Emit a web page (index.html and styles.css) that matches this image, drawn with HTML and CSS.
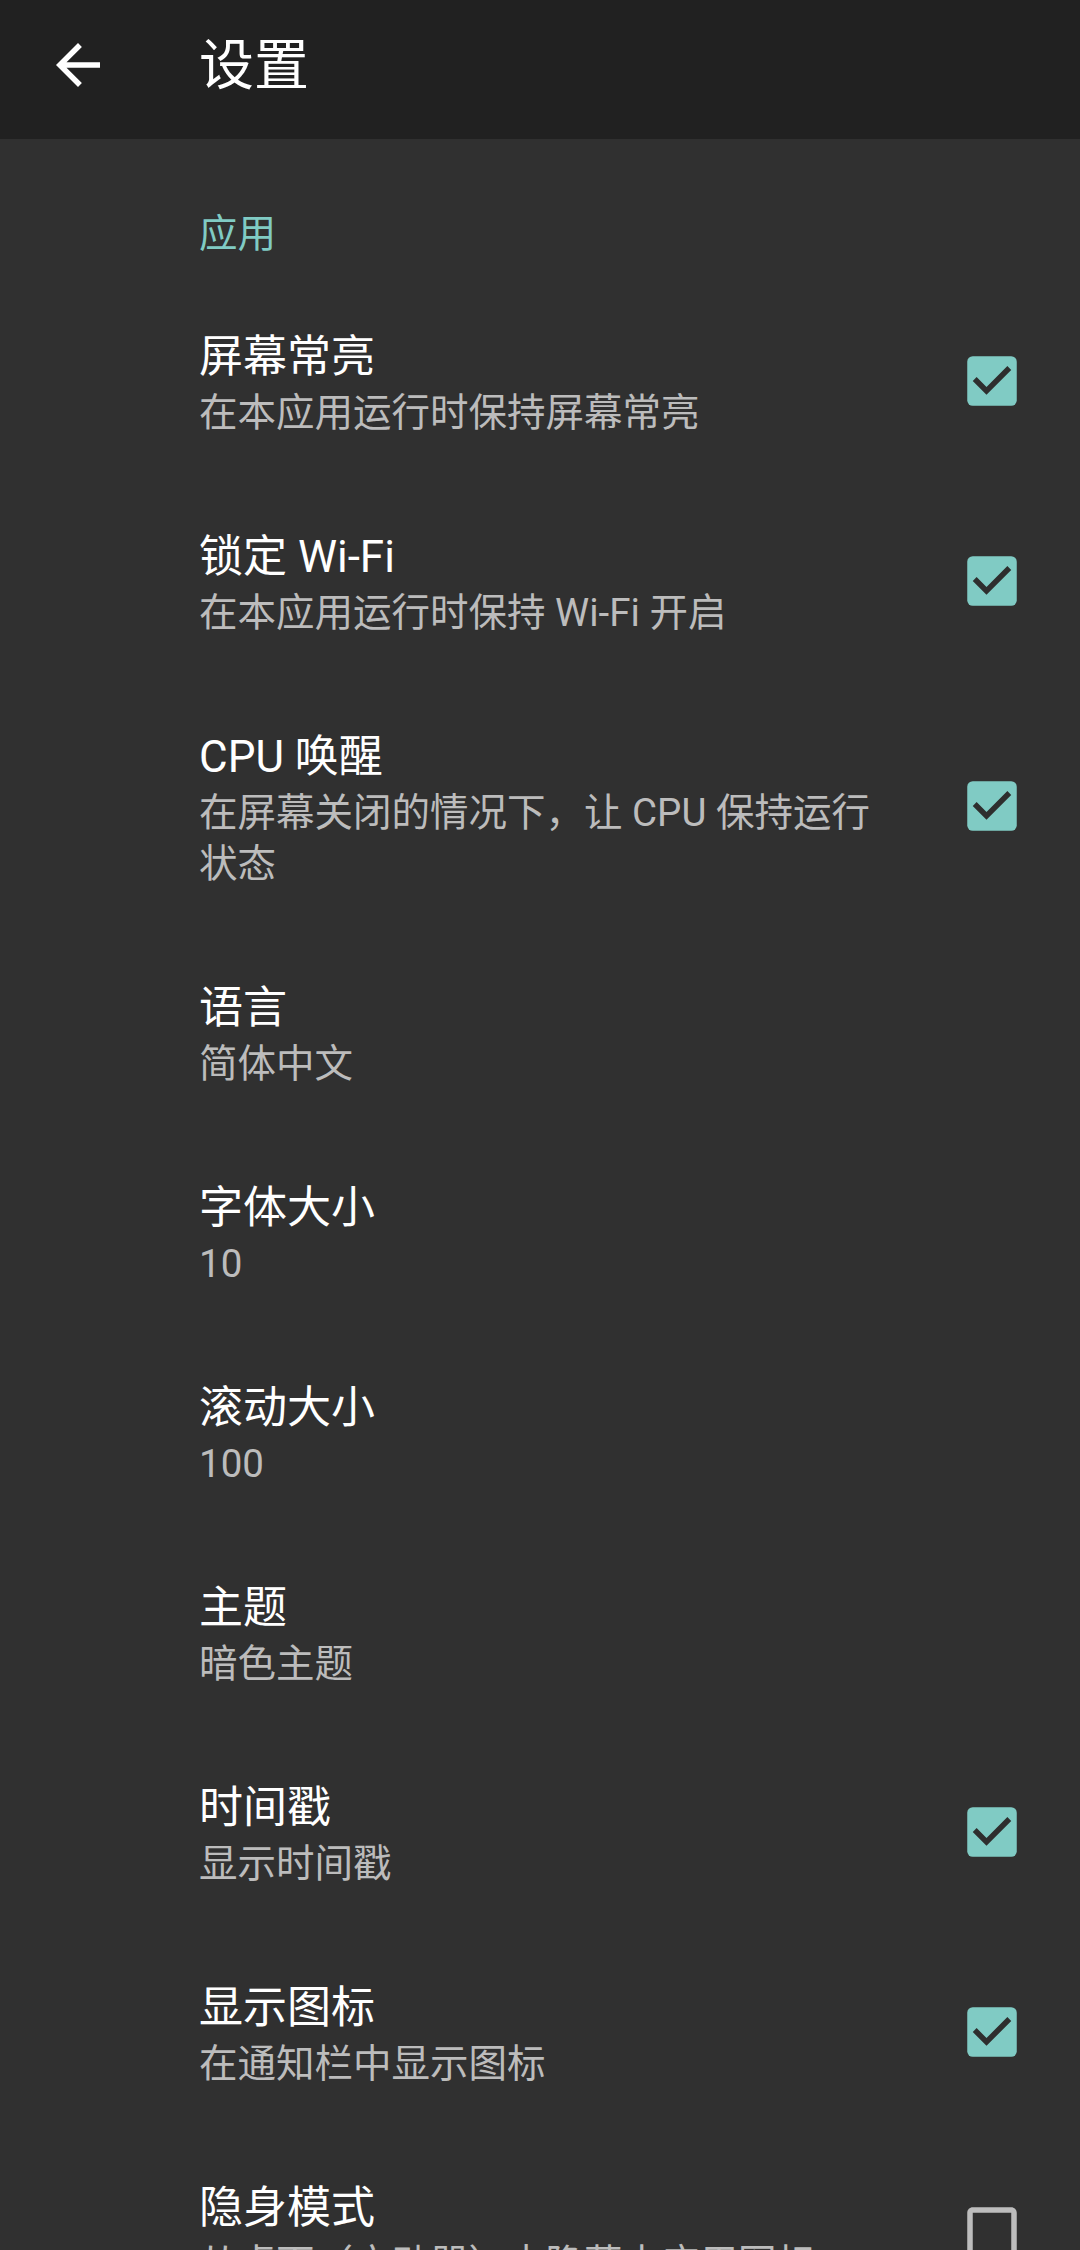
FILE: index.html
```html
<!DOCTYPE html>
<html lang="zh-CN">
<head>
<meta charset="utf-8">
<title>设置</title>
<link rel="stylesheet" href="styles.css">
</head>
<body>
<header class="appbar">
  <svg class="back" viewBox="0 0 24 24" width="66" height="66"><path d="M20 11H7.83l5.59-5.59L12 4l-8 8 8 8 1.41-1.41L7.83 13H20v-2z" fill="#ffffff"/></svg>
  <h1 class="appbar-title">设置</h1>
</header>
<main class="prefs">
  <div class="section">应用</div>

  <div class="row">
    <div class="text"><div class="title">屏幕常亮</div><div class="summary">在本应用运行时保持屏幕常亮</div></div>
    <svg class="cb" viewBox="0 0 24 24" width="66" height="66"><rect x="3" y="3" width="18" height="18" rx="2" fill="#80cbc4"/><path d="M10 17l-5-5 1.41-1.41L10 14.17l7.59-7.59L19 8l-9 9z" fill="#2e2e2e"/></svg>
  </div>

  <div class="row">
    <div class="text"><div class="title">锁定 Wi-Fi</div><div class="summary">在本应用运行时保持 Wi-Fi 开启</div></div>
    <svg class="cb" viewBox="0 0 24 24" width="66" height="66"><rect x="3" y="3" width="18" height="18" rx="2" fill="#80cbc4"/><path d="M10 17l-5-5 1.41-1.41L10 14.17l7.59-7.59L19 8l-9 9z" fill="#2e2e2e"/></svg>
  </div>

  <div class="row">
    <div class="text"><div class="title">CPU 唤醒</div><div class="summary">在屏幕关闭的情况下，让 CPU 保持运行状态</div></div>
    <svg class="cb" viewBox="0 0 24 24" width="66" height="66"><rect x="3" y="3" width="18" height="18" rx="2" fill="#80cbc4"/><path d="M10 17l-5-5 1.41-1.41L10 14.17l7.59-7.59L19 8l-9 9z" fill="#2e2e2e"/></svg>
  </div>

  <div class="row">
    <div class="text"><div class="title">语言</div><div class="summary">简体中文</div></div>
  </div>

  <div class="row">
    <div class="text"><div class="title">字体大小</div><div class="summary">10</div></div>
  </div>

  <div class="row">
    <div class="text"><div class="title">滚动大小</div><div class="summary">100</div></div>
  </div>

  <div class="row">
    <div class="text"><div class="title">主题</div><div class="summary">暗色主题</div></div>
  </div>

  <div class="row">
    <div class="text"><div class="title">时间戳</div><div class="summary">显示时间戳</div></div>
    <svg class="cb" viewBox="0 0 24 24" width="66" height="66"><rect x="3" y="3" width="18" height="18" rx="2" fill="#80cbc4"/><path d="M10 17l-5-5 1.41-1.41L10 14.17l7.59-7.59L19 8l-9 9z" fill="#2e2e2e"/></svg>
  </div>

  <div class="row">
    <div class="text"><div class="title">显示图标</div><div class="summary">在通知栏中显示图标</div></div>
    <svg class="cb" viewBox="0 0 24 24" width="66" height="66"><rect x="3" y="3" width="18" height="18" rx="2" fill="#80cbc4"/><path d="M10 17l-5-5 1.41-1.41L10 14.17l7.59-7.59L19 8l-9 9z" fill="#2e2e2e"/></svg>
  </div>

  <div class="row">
    <div class="text"><div class="title">隐身模式</div><div class="summary">从桌面（启动器）中隐藏本应用图标</div></div>
    <svg class="cb" viewBox="0 0 24 24" width="66" height="66"><path d="M19 5v14H5V5h14m0-2H5c-1.1 0-2 .9-2 2v14c0 1.1.89 2 2 2h14c1.1 0 2-.9 2-2V5c0-1.1-.9-2-2-2z" fill="#bdbdbd"/></svg>
  </div>
</main>
</body>
</html>
```

FILE: styles.css
```css
html, body {
  margin: 0;
  padding: 0;
  width: 1080px;
  height: 2250px;
  overflow: hidden;
  background: #303030;
  font-family: Roboto, "Noto Sans CJK SC", sans-serif;
}

.appbar {
  height: 139px;
  box-sizing: border-box;
  background: #212121;
  display: flex;
  align-items: center;
  padding-bottom: 9px;
}

.back {
  display: block;
  margin-left: 45px;
  flex: none;
}

.appbar-title {
  margin: 0 0 0 88px;
  font-size: 55px;
  font-weight: 400;
  line-height: 66px;
  color: #ffffff;
}

.section {
  padding: 70px 0 21px 199px;
  font-size: 38.5px;
  line-height: 50px;
  color: #80cbc4;
}

.row {
  display: grid;
  grid-template-columns: 1fr 66px;
  column-gap: 69px;
  align-items: center;
  padding: 44px 55px 42.5px 199px;
}

.text {
  grid-column: 1;
}

.title {
  font-size: 44px;
  line-height: 66px;
  color: #ffffff;
}

.summary {
  margin-top: -3.5px;
  font-size: 38.5px;
  line-height: 51px;
  color: #bcbcbc;
}

.cb {
  grid-column: 2;
  display: block;
}
```
